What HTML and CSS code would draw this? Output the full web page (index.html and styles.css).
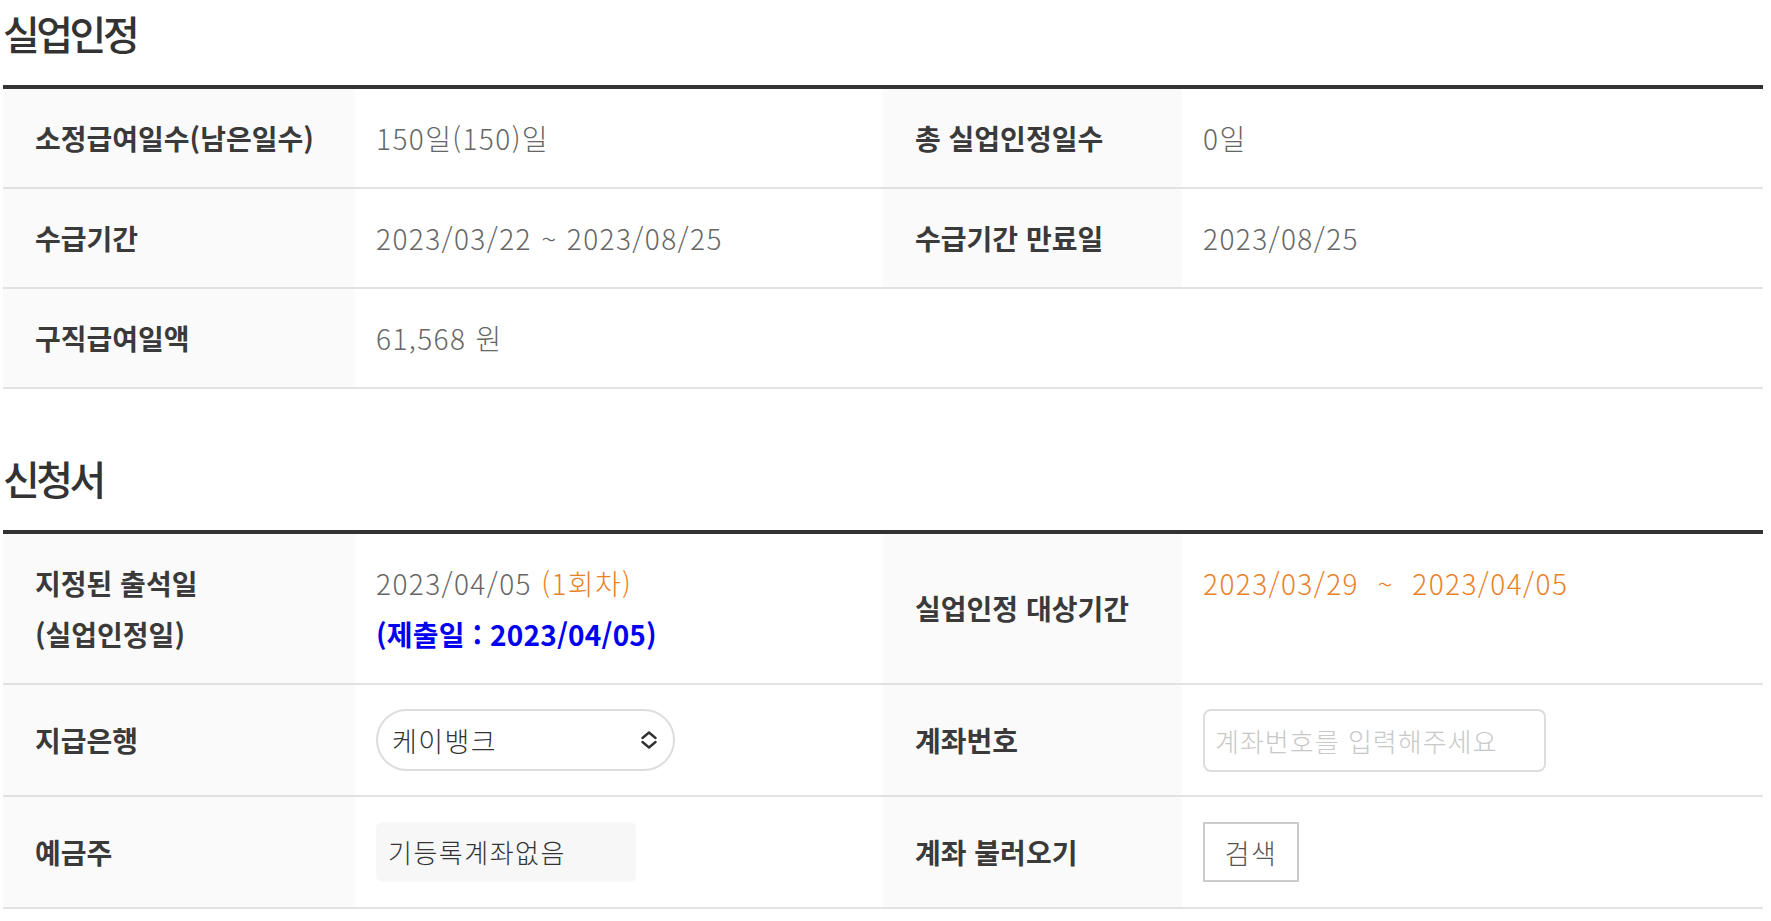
FILE: index.html
```html
<!DOCTYPE html>
<html lang="ko">

<head>
  <meta charset="UTF-8">
  <meta name="viewport" content="width=device-width, initial-scale=1.0">
  <title>실업인정 신청</title>
  <link rel="stylesheet" href="styles.css">
</head>

<body>
  <div class="wrap">

    <section class="section">
      <h2 class="title">실업인정</h2>
      <table class="info">
        <colgroup>
          <col class="c-label">
          <col class="c-value">
          <col class="c-label2">
          <col class="c-value2">
        </colgroup>
        <tr>
          <th>소정급여일수(남은일수)</th>
          <td>150일(150)일</td>
          <th>총 실업인정일수</th>
          <td>0일</td>
        </tr>
        <tr>
          <th>수급기간</th>
          <td>2023/03/22 ~ 2023/08/25</td>
          <th>수급기간 만료일</th>
          <td>2023/08/25</td>
        </tr>
        <tr>
          <th>구직급여일액</th>
          <td colspan="3">61,568 원</td>
        </tr>
      </table>
    </section>

    <section class="section">
      <h2 class="title">신청서</h2>
      <table class="info">
        <colgroup>
          <col class="c-label">
          <col class="c-value">
          <col class="c-label2">
          <col class="c-value2">
        </colgroup>
        <tr>
          <th>지정된 출석일<br>(실업인정일)</th>
          <td>
            2023/04/05 <span class="orange">(1회차)</span><br>
            <span class="blue">(제출일 : 2023/04/05)</span>
          </td>
          <th>실업인정 대상기간</th>
          <td class="top"><span class="orange">2023/03/29 &nbsp;~&nbsp; 2023/04/05</span></td>
        </tr>
        <tr>
          <th>지급은행</th>
          <td>
            <span class="select-wrap">
              <select class="select" id="bank">
                <option>케이뱅크</option>
                <option>국민은행</option>
                <option>신한은행</option>
                <option>우리은행</option>
              </select>
              <svg class="select-arrow" width="18" height="18" viewBox="0 0 18 18">
                <path d="M2.5 7 L9 1.5 L15.5 7 M2.5 11 L9 16.5 L15.5 11" fill="none" stroke="#333" stroke-width="2.4"
                  stroke-linecap="round" stroke-linejoin="round" />
              </svg>
            </span>
          </td>
          <th>계좌번호</th>
          <td><input type="text" class="account" id="account" placeholder="계좌번호를 입력해주세요"></td>
        </tr>
        <tr>
          <th>예금주</th>
          <td><span class="holder">기등록계좌없음</span></td>
          <th>계좌 불러오기</th>
          <td><button class="search-btn" id="searchBtn">검색</button></td>
        </tr>
      </table>
    </section>

  </div>
</body>

</html>
```

FILE: styles.css
```css
body {
  margin: 0;
  font-family: "Noto Sans CJK KR", "Noto Sans", sans-serif;
  background-color: #fff;
  color: #333;
}

.wrap {
  margin: 0 8px 0 3px;
}

.section + .section {
  margin-top: 56px;
}

.title {
  margin: 0 0 19px;
  font-size: 40px;
  font-weight: 500;
  line-height: 66px;
  letter-spacing: -3.5px;
  color: #333;
}

.info {
  width: 100%;
  table-layout: fixed;
  border-collapse: collapse;
  border-top: 4px solid #333;
}

.c-label {
  width: 352px;
}

.c-value {
  width: 528px;
}

.c-label2 {
  width: 299px;
}

.info tr {
  border-bottom: 2px solid #e2e2e2;
}

.info th {
  background-color: #fafafa;
  padding: 23.5px 32px;
  text-align: left;
  font-size: 28px;
  font-weight: 700;
  line-height: 51px;
  color: #3a3a3a;
  vertical-align: middle;
}

.info td {
  padding: 23.5px 21px;
  font-family: "Noto Sans CJK KR Light", "Noto Sans CJK KR", "Noto Sans", sans-serif;
  font-size: 28px;
  font-weight: 300;
  line-height: 51px;
  letter-spacing: 1.4px;
  color: #666;
  vertical-align: middle;
}

.info td.top {
  vertical-align: top;
}

.orange {
  color: #e8822a;
}

.blue {
  color: #0000f0;
  font-family: "Noto Sans CJK KR", "Noto Sans", sans-serif;
  font-weight: 700;
  letter-spacing: 0.2px;
}

.select-wrap {
  position: relative;
  display: inline-block;
  vertical-align: middle;
}

.select {
  display: block;
  width: 299px;
  height: 62px;
  padding: 0 40px 0 14px;
  border: 2px solid #ddd;
  border-radius: 31px;
  background-color: #fff;
  font-family: inherit;
  font-size: 27px;
  font-weight: 300;
  letter-spacing: 1.4px;
  color: #333;
  appearance: none;
  -webkit-appearance: none;
  box-sizing: border-box;
}

.select-arrow {
  position: absolute;
  right: 17px;
  top: 22px;
  pointer-events: none;
}

.account {
  display: block;
  width: 343px;
  height: 63px;
  padding: 0 10px;
  border: 2px solid #ddd;
  border-radius: 8px;
  font-family: inherit;
  font-size: 26px;
  font-weight: 300;
  letter-spacing: 1px;
  color: #333;
  box-sizing: border-box;
}

.account::placeholder {
  color: #c8c8c8;
}

.holder {
  display: inline-block;
  vertical-align: middle;
  width: 260px;
  height: 60px;
  margin: 1.5px 0;
  padding: 0 12px;
  border-radius: 6px;
  background-color: #f7f7f7;
  font-size: 26px;
  line-height: 60px;
  letter-spacing: 1.5px;
  color: #333;
  box-sizing: border-box;
}

.search-btn {
  display: block;
  width: 96px;
  height: 60px;
  margin: 1.5px 0;
  padding: 0;
  border: 2px solid #ccc;
  border-radius: 0;
  background-color: #fff;
  font-family: inherit;
  font-size: 27px;
  font-weight: 300;
  letter-spacing: 1.5px;
  color: #555;
  cursor: pointer;
}
```
